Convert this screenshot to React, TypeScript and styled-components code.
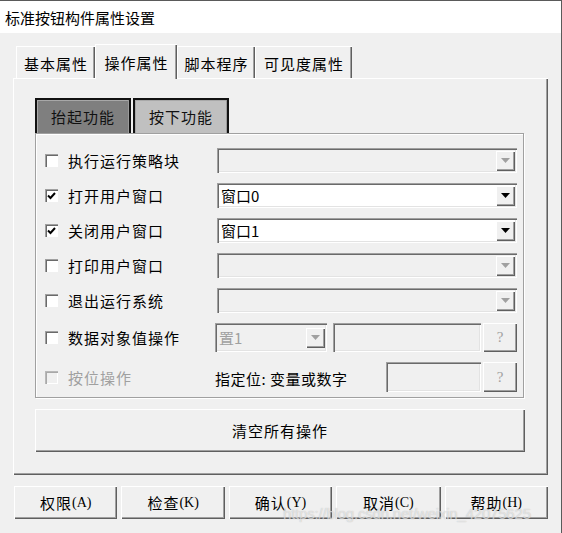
import React from "react";
import styled, { createGlobalStyle, css } from "styled-components";

const GlobalStyle = createGlobalStyle`
  html, body {
    margin: 0;
    padding: 0;
    background: #f0f0f0;
  }
  * {
    box-sizing: border-box;
  }
`;

const FONT = `"Noto Sans CJK SC", "Liberation Sans", sans-serif`;

const raised = css`
  background: #f0f0f0;
  box-shadow: inset 1px 1px #ffffff, inset -1px -1px #5f5f5f, inset -2px -2px #a0a0a0;
`;

const sunken = css`
  box-shadow: inset 1px 1px #a0a0a0, inset 2px 2px #6a6a6a, inset -1px -1px #ffffff, inset -2px -2px #e3e3e3;
`;

const Window = styled.div`
  position: relative;
  width: 562px;
  height: 533px;
  background: #f0f0f0;
  border-top: 1px solid #5a5a5a;
  border-right: 1px solid #5a5a5a;
  font-family: ${FONT};
  color: #000;
  overflow: hidden;
`;

const TitleBar = styled.div`
  height: 32px;
  background: #fff;
  display: flex;
  align-items: center;
  padding-left: 5px;
  font-size: 15px;
  letter-spacing: 0px;
`;

const Body = styled.div`
  padding: 11px 13px 0 13px;
  display: flex;
  flex-direction: column;
`;

const TabRow = styled.div`
  display: flex;
  align-items: flex-end;
  padding-left: 3px;
  height: 34px;
  position: relative;
  z-index: 2;
`;

const Tab = styled.div<{ $active?: boolean; $w: number }>`
  width: ${({ $w }) => $w}px;
  height: ${({ $active }) => ($active ? 35 : 32)}px;
  margin-bottom: ${({ $active }) => ($active ? -1 : 0)}px;
  display: flex;
  align-items: center;
  justify-content: center;
  font-size: 15px;
  letter-spacing: 1px;
  background: #f0f0f0;
  border-top: 1px solid #ffffff;
  border-left: 1px solid #ffffff;
  box-shadow: inset -1px 0 #5f5f5f, inset -2px 0 #a0a0a0;
  padding-top: ${({ $active }) => ($active ? 0 : 2)}px;
`;

const Panel = styled.div`
  height: 397px;
  border-top: 1px solid #ffffff;
  border-left: 1px solid #ffffff;
  box-shadow: inset -1px -1px #5f5f5f, inset -2px -2px #a0a0a0;
  padding: 19px 24px 0 21px;
  display: flex;
  flex-direction: column;
`;

const SubTabRow = styled.div`
  display: flex;
  gap: 2px;
  height: 35px;
`;

const SubTab = styled.div<{ $active?: boolean }>`
  width: 96px;
  height: 35px;
  display: flex;
  align-items: center;
  justify-content: center;
  font-size: 15px;
  letter-spacing: 1px;
  color: #111;
  background: ${({ $active }) => ($active ? "#7f7f7f" : "#c0c0c0")};
  border: 2px solid #111;
  border-bottom: none;
  box-shadow: inset -1px 0 #9a9a9a, inset 1px 1px #a8a8a8;
`;

const Group = styled.div`
  width: 489px;
  height: 265px;
  border: 1px solid #a0a0a0;
  box-shadow: inset 1px 1px #ffffff, 1px 1px #ffffff;
  padding: 14px 6px 0 9px;
  display: flex;
  flex-direction: column;
  gap: 10px;
`;

const Row = styled.div<{ $h?: number }>`
  display: flex;
  align-items: center;
  height: ${({ $h }) => $h ?? 25}px;
`;

const CheckCell = styled.label<{ $disabled?: boolean }>`
  width: 172px;
  display: flex;
  align-items: center;
  gap: 10px;
  font-size: 15px;
  letter-spacing: 1px;
  color: ${({ $disabled }) => ($disabled ? "#a0a0a0" : "#000")};
`;

const Box = styled.span<{ $disabled?: boolean }>`
  width: 13px;
  height: 13px;
  flex: none;
  display: flex;
  align-items: center;
  justify-content: center;
  background: ${({ $disabled }) => ($disabled ? "#f0f0f0" : "#ffffff")};
  box-shadow: inset 1px 1px #a0a0a0, inset 2px 2px #6a6a6a, inset -1px -1px #ffffff;
  ${({ $disabled }) => $disabled && "box-shadow: inset 1px 1px #b8b8b8, inset 2px 2px #a8a8a8, inset -1px -1px #ffffff;"}
`;

const Combo = styled.div<{ $enabled?: boolean; $w?: number }>`
  width: ${({ $w }) => $w ?? 300}px;
  height: 100%;
  flex: none;
  display: flex;
  align-items: center;
  justify-content: space-between;
  padding: 2px 2px 2px 4px;
  background: ${({ $enabled }) => ($enabled ? "#ffffff" : "#f0f0f0")};
  ${sunken};
  font-size: 15px;
  color: ${({ $enabled }) => ($enabled ? "#000" : "#a0a0a0")};
`;

const DropButton = styled.div`
  width: 19px;
  height: 20px;
  ${raised};
  display: flex;
  align-items: center;
  justify-content: center;
`;

const Field = styled.div<{ $w: number }>`
  width: ${({ $w }) => $w}px;
  height: 100%;
  flex: none;
  background: #f0f0f0;
  ${sunken};
`;

const HelpButton = styled.div`
  width: 34px;
  height: 100%;
  flex: none;
  margin-left: 2px;
  ${raised};
  display: flex;
  align-items: center;
  justify-content: center;
  font-family: "Liberation Serif", serif;
  font-size: 15px;
  color: #a0a0a0;
`;

const BitLabel = styled.span`
  width: 171px;
  font-size: 15px;
  letter-spacing: 0.5px;
  flex: none;
  padding-top: 2px;
`;

const ClearButton = styled.div`
  margin-top: 11px;
  width: 490px;
  height: 43px;
  ${raised};
  display: flex;
  align-items: center;
  justify-content: center;
  font-size: 15px;
  letter-spacing: 1px;
`;

const ButtonBar = styled.div`
  display: flex;
  gap: 4px;
  margin-top: 11px;
  padding-left: 1px;
`;

const DlgButton = styled.div<{ $w: number }>`
  width: ${({ $w }) => $w}px;
  height: 33px;
  ${raised};
  display: flex;
  align-items: center;
  justify-content: center;
  font-size: 15px;
  letter-spacing: 1px;
`;

const Key = styled.span`
  font-family: "Liberation Serif", serif;
  font-size: 14px;
  letter-spacing: 0;
`;

const Watermark = styled.div`
  position: absolute;
  left: 283px;
  top: 504px;
  font-family: "Liberation Sans", sans-serif;
  font-size: 15px;
  color: rgba(255, 255, 255, 0.55);
  text-shadow: 0 0 1px rgba(140, 140, 140, 0.6);
  letter-spacing: -0.2px;
  pointer-events: none;
`;

const Arrow = ({ enabled }: { enabled?: boolean }) => (
  <svg width="9" height="5" viewBox="0 0 9 5">
    <path d="M0 0 H9 L4.5 5 Z" fill={enabled ? "#000" : "#a0a0a0"} />
  </svg>
);

const Check = () => (
  <svg width="9" height="8" viewBox="0 0 9 8">
    <path d="M1 3.5 L3.5 6 L8 1" stroke="#000" strokeWidth="2" fill="none" />
  </svg>
);

type Op = { label: string; checked?: boolean; value?: string };

const ops: Op[] = [
  { label: "执行运行策略块" },
  { label: "打开用户窗口", checked: true, value: "窗口0" },
  { label: "关闭用户窗口", checked: true, value: "窗口1" },
  { label: "打印用户窗口" },
  { label: "退出运行系统" },
];

const buttons = [
  { t: "权限", k: "(A)", w: 104 },
  { t: "检查", k: "(K)", w: 104 },
  { t: "确认", k: "(Y)", w: 104 },
  { t: "取消", k: "(C)", w: 105 },
  { t: "帮助", k: "(H)", w: 104 },
];

export default function App() {
  return (
    <Window>
      <GlobalStyle />
      <TitleBar>标准按钮构件属性设置</TitleBar>
      <Body>
        <TabRow>
          <Tab $w={79}>基本属性</Tab>
          <Tab $w={82} $active>
            操作属性
          </Tab>
          <Tab $w={78}>脚本程序</Tab>
          <Tab $w={97}>可见度属性</Tab>
        </TabRow>
        <Panel>
          <SubTabRow>
            <SubTab $active>抬起功能</SubTab>
            <SubTab>按下功能</SubTab>
          </SubTabRow>
          <Group>
            {ops.map((op) => (
              <Row key={op.label}>
                <CheckCell>
                  <Box>{op.checked && <Check />}</Box>
                  {op.label}
                </CheckCell>
                <Combo $enabled={!!op.value}>
                  <span>{op.value}</span>
                  <DropButton>
                    <Arrow enabled={!!op.value} />
                  </DropButton>
                </Combo>
              </Row>
            ))}
            <Row $h={29}>
              <CheckCell>
                <Box />
                数据对象值操作
              </CheckCell>
              <Combo $w={112}>
                <span>置1</span>
                <DropButton>
                  <Arrow />
                </DropButton>
              </Combo>
              <Field $w={148} style={{ marginLeft: 6 }} />
              <HelpButton>?</HelpButton>
            </Row>
            <Row $h={30}>
              <CheckCell $disabled>
                <Box $disabled />
                按位操作
              </CheckCell>
              <BitLabel>指定位: 变量或数字</BitLabel>
              <Field $w={95} />
              <HelpButton>?</HelpButton>
            </Row>
          </Group>
          <ClearButton>清空所有操作</ClearButton>
        </Panel>
        <ButtonBar>
          {buttons.map((b) => (
            <DlgButton key={b.t} $w={b.w}>
              {b.t}
              <Key>{b.k}</Key>
            </DlgButton>
          ))}
        </ButtonBar>
      </Body>
      <Watermark>https://blog.csdn.net/weixin_42075625</Watermark>
    </Window>
  );
}
